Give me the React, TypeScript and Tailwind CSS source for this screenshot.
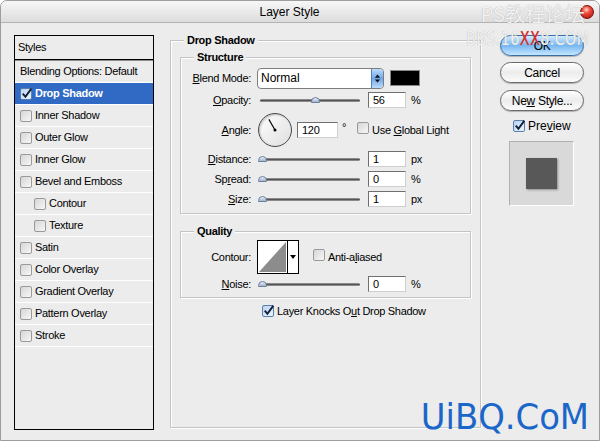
import React from "react";

const UI_FONT = "font-['Liberation_Sans',Arial,sans-serif]";

const CheckBox: React.FC<{ checked?: boolean }> = ({ checked }) => (
  <span
    className={`relative inline-block w-[12px] h-[12px] shrink-0 rounded-[2px] border ${
      checked
        ? "border-[#5a7fae] bg-gradient-to-br from-[#b9d4f2] to-[#eef5fd]"
        : "border-[#9a9a9a] bg-gradient-to-br from-[#d6d6d6] to-[#f7f7f7]"
    }`}
  >
    {checked && (
      <svg viewBox="0 0 12 12" className="absolute -left-[1px] -top-[2px] w-[13px] h-[13px]">
        <path d="M2.5 6.2 L5 9 L10.5 1.5" fill="none" stroke="#13213d" strokeWidth="1.8" />
      </svg>
    )}
  </span>
);

const StyleRow: React.FC<{ label: string; indent?: boolean; selected?: boolean; noBox?: boolean }> = ({
  label,
  indent,
  selected,
  noBox,
}) => (
  <div
    className={`h-[22px] flex items-center gap-[3px] border-b border-white ${
      indent ? "pl-[19px]" : "pl-[5px]"
    } ${selected ? "bg-[#316ac5] text-white font-bold" : "text-black"} ${noBox ? "pl-[3px]" : ""}`}
  >
    {!noBox && <CheckBox checked={selected} />}
    <span>{label}</span>
  </div>
);

const Slider: React.FC<{ pos: number }> = ({ pos }) => (
  <div className="w-[111px] flex items-center">
    <div className="relative ml-[3px] w-[100px] h-[3px] rounded-full bg-gradient-to-b from-[#a5a5a5] via-[#555] to-[#a5a5a5]">
      <span
        className="absolute -top-[2px] w-[9px] h-[6px] rounded-t-full rounded-b-[2px] border border-[#6d7f99] bg-gradient-to-b from-[#eef3fa] to-[#9fb3cf]"
        style={{ left: pos - 4 }}
      />
    </div>
  </div>
);

const NumField: React.FC<{ value: string; w?: string }> = ({ value, w = "w-[38px]" }) => (
  <div className={`${w} h-[16px] bg-white border border-[#6f6f6f] border-r-[#cfcfcf] border-b-[#cfcfcf] pl-[4px] flex items-center leading-none`}>
    {value}
  </div>
);

const Label: React.FC<{ children: React.ReactNode }> = ({ children }) => (
  <div className="w-[70px] text-right shrink-0">{children}</div>
);

const SliderRow: React.FC<{ label: React.ReactNode; pos: number; value: string; unit: string; h?: string }> = ({
  label,
  pos,
  value,
  unit,
  h = "h-[20px]",
}) => (
  <div className={`${h} flex items-center`}>
    <Label>{label}</Label>
    <div className="ml-[6px] flex items-center">
      <Slider pos={pos} />
      <NumField value={value} />
      <span className="ml-[5px]">{unit}</span>
    </div>
  </div>
);

const GroupBox: React.FC<{ title: string; className?: string; children: React.ReactNode }> = ({
  title,
  className = "",
  children,
}) => (
  <div
    className={`relative border border-[#c4c4c4] shadow-[1px_1px_0_#fff,inset_1px_1px_0_#fff] ${className}`}
  >
    <span className="absolute -top-[8px] left-[13px] px-[3px] bg-[#ececec] font-bold leading-[14px]">
      {title}
    </span>
    {children}
  </div>
);

const PillButton: React.FC<{ children: React.ReactNode; primary?: boolean }> = ({ children, primary }) => (
  <div
    className={`h-[21px] w-[84px] rounded-full flex items-center justify-center text-[12px] border shadow-[0_1px_1px_rgba(0,0,0,0.25)] ${
      primary
        ? "border-[#3c6ea6] bg-gradient-to-b from-[#d3ebff] via-[#78b7f0] to-[#c4e6ff]"
        : "border-[#6b6b6b] bg-gradient-to-b from-[#ffffff] via-[#ececec] to-[#fbfbfb]"
    }`}
  >
    {children}
  </div>
);

export default function App() {
  return (
    <div
      className={`relative w-[600px] h-[441px] overflow-hidden bg-[#ececec] border border-[#9d9d9d] rounded-t-[7px] text-[11px] tracking-[-0.3px] text-black ${UI_FONT}`}
    >
      {/* title bar */}
      <div className="h-[22px] flex items-center border-b border-[#b3b3b3] bg-gradient-to-b from-[#f7f7f7] to-[#dcdcdc]">
        <div className="flex-1 text-center text-[12px] pr-[2px] tracking-normal">Layer Style</div>
        <span className="mr-[5px] w-[14px] h-[14px] rounded-full border border-[#7a1010] bg-[radial-gradient(circle_at_45%_30%,#ffd6d0_0%,#f04a3a_35%,#a40d0d_100%)]" />
      </div>

      {/* body */}
      <div className="flex pt-[12px] pl-[13px]">
        {/* styles list */}
        <div className="w-[140px] h-[395px] border border-black bg-[#ececec] flex flex-col">
          <div className="h-[24px] flex items-center pl-[3px] border-b border-black">Styles</div>
          <div className="h-[1px] bg-[#8d8d8d]" />
          <StyleRow label="Blending Options: Default" noBox />
          <StyleRow label="Drop Shadow" selected />
          <StyleRow label="Inner Shadow" />
          <StyleRow label="Outer Glow" />
          <StyleRow label="Inner Glow" />
          <StyleRow label="Bevel and Emboss" />
          <StyleRow label="Contour" indent />
          <StyleRow label="Texture" indent />
          <StyleRow label="Satin" />
          <StyleRow label="Color Overlay" />
          <StyleRow label="Gradient Overlay" />
          <StyleRow label="Pattern Overlay" />
          <StyleRow label="Stroke" />
        </div>

        {/* settings */}
        <GroupBox title="Drop Shadow" className="ml-[16px] mt-[5px] w-[311px] h-[388px] pt-[16px] px-[9px]">
          <GroupBox title="Structure" className="pt-[9px] pb-[4px]">
            <div className="h-[22px] flex items-center">
              <Label>
                <u>B</u>lend Mode:
              </Label>
              <div className="ml-[6px] w-[127px] h-[21px] rounded-[4px] border border-[#7d7d7d] bg-white flex items-center pl-[3px] overflow-hidden">
                <span className="flex-1 text-[12px] tracking-normal">Normal</span>
                <span className="w-[12px] h-[19px] rounded-r-[3px] border-l border-[#5b7fb0] bg-gradient-to-b from-[#bcdcff] via-[#6ea6e8] to-[#bcdcff] flex items-center justify-center">
                  <svg viewBox="0 0 8 12" className="w-[7px] h-[11px]">
                    <path d="M1 5 L4 1.5 L7 5 Z M1 7 L4 10.5 L7 7 Z" fill="#111" />
                  </svg>
                </span>
              </div>
              <span className="ml-[6px] w-[30px] h-[16px] bg-black border border-[#888]" />
            </div>
            <SliderRow h="h-[22px]" label={<><u>O</u>pacity:</>} pos={55} value="56" unit="%" />
            <div className="h-[38px] flex items-center">
              <Label>
                <u>A</u>ngle:
              </Label>
              <div className="ml-[7px] w-[34px] h-[34px] rounded-full border border-[#4a4a4a] bg-gradient-to-br from-[#ffffff] to-[#dedede] shadow-[inset_1px_1px_2px_rgba(0,0,0,0.25)] flex items-center justify-center">
                <svg viewBox="0 0 34 34" className="w-[34px] h-[34px]">
                  <line x1="17" y1="17" x2="10.5" y2="5.7" stroke="#000" strokeWidth="1.2" />
                  <circle cx="17" cy="17" r="1.6" fill="#000" />
                </svg>
              </div>
              <div className="ml-[5px]">
                <NumField value="120" w="w-[41px]" />
              </div>
              <span className="ml-[4px] -mt-[6px]">°</span>
              <span className="ml-[11px]">
                <CheckBox />
              </span>
              <span className="ml-[3px]">
                Use <u>G</u>lobal Light
              </span>
            </div>
            <SliderRow label={<><u>D</u>istance:</>} pos={2} value="1" unit="px" />
            <SliderRow label={<>Sp<u>r</u>ead:</>} pos={2} value="0" unit="%" />
            <SliderRow label={<><u>S</u>ize:</>} pos={2} value="1" unit="px" />
          </GroupBox>

          <GroupBox title="Quality" className="mt-[17px] pt-[8px] pb-[3px]">
            <div className="h-[34px] flex items-center">
              <Label>Contour:</Label>
              <div className="ml-[6px] w-[42px] h-[34px] border border-black bg-white flex">
                <svg viewBox="0 0 29 32" className="w-[29px] h-[32px]">
                  <polygon points="1,31 28,1 28,31" fill="#8c8c8c" />
                </svg>
                <span className="flex-1 border-l border-black flex items-center justify-center">
                  <svg viewBox="0 0 6 4" className="w-[6px] h-[4px]">
                    <polygon points="0,0 6,0 3,4" fill="#000" />
                  </svg>
                </span>
              </div>
              <span className="ml-[14px]">
                <CheckBox />
              </span>
              <span className="ml-[3px]">
                Anti-a<u>l</u>iased
              </span>
            </div>
            <SliderRow label={<><u>N</u>oise:</>} pos={2} value="0" unit="%" />
          </GroupBox>

          <div className="mt-[5px] h-[16px] flex items-center ml-[82px] gap-[3px]">
            <CheckBox checked />
            <span>
              Layer Knocks O<u>u</u>t Drop Shadow
            </span>
          </div>
        </GroupBox>

        {/* buttons */}
        <div className="ml-[19px] w-[84px] flex flex-col">
          <PillButton primary>OK</PillButton>
          <div className="mt-[6px]">
            <PillButton>Cancel</PillButton>
          </div>
          <div className="mt-[7px]">
            <PillButton>
              Ne<u>w</u>&nbsp;Style...
            </PillButton>
          </div>
          <div className="mt-[9px] ml-[13px] h-[12px] flex items-center gap-[3px]">
            <CheckBox checked />
            <span className="text-[12px] tracking-normal">
              Pre<u>v</u>iew
            </span>
          </div>
          <div className="mt-[9px] ml-[9px] w-[65px] h-[65px] bg-[#d9d9d9] border border-[#b0b0b0] border-r-white border-b-white flex items-center justify-center">
            <span className="w-[31px] h-[31px] bg-[#585858] shadow-[1px_1px_2px_rgba(0,0,0,0.35)]" />
          </div>
        </div>
      </div>

      {/* watermarks */}
      <div className="absolute right-[14px] top-[1px] text-[20px] leading-[24px] text-white/85 font-['Noto_Sans_CJK_SC',sans-serif] tracking-normal [text-shadow:0_0_1px_#9a9a9a]">
        PS教程论坛
      </div>
      <div className="absolute right-[9px] top-[25px] origin-right scale-x-[0.72] text-[20px] leading-[24px] text-white/85 font-['DejaVu_Sans',sans-serif] tracking-[0.5px] [text-shadow:0_0_1px_#9a9a9a]">
        BBS.16<span className="text-[#e0262a]">XX</span>8.COM
      </div>
      <div className="absolute right-[10px] bottom-[4px] origin-right scale-x-[0.94] text-[36px] leading-[38px] text-[#1b66c9] font-['DejaVu_Sans',sans-serif] tracking-normal">
        UiBQ.CoM
      </div>
    </div>
  );
}
